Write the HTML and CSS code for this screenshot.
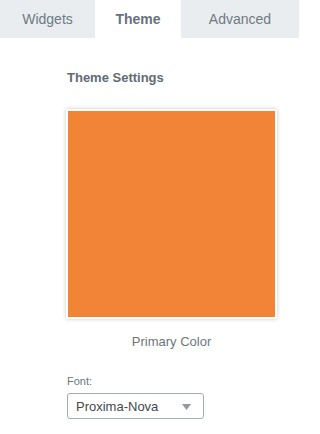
FILE: index.html
```html
<!DOCTYPE html>
<html>
<head>
<meta charset="utf-8">
<link rel="stylesheet" href="styles.css">
</head>
<body>
<div class="tabs">
  <div class="tab tab-widgets">Widgets</div>
  <div class="tab tab-theme active">Theme</div>
  <div class="tab tab-advanced">Advanced</div>
</div>
<div class="content">
  <h2 class="title">Theme Settings</h2>
  <div class="swatch"><div class="swatch-fill"></div></div>
  <div class="swatch-label">Primary Color</div>
  <label class="field-label">Font:</label>
  <div class="select">
    <span>Proxima-Nova</span>
    <svg class="caret" width="9" height="6" viewBox="0 0 9 6"><path d="M0 0H9L4.5 6Z" fill="#8e99a2"/></svg>
  </div>
</div>
</body>
</html>
```
FILE: styles.css
```css
html, body { margin: 0; padding: 0; background: #fff; }
body { font-family: "Liberation Sans", Arial, sans-serif; color: #6b7680; width: 299px; }
.tabs { display: flex; height: 38px; background: #e9edef; }
.tab { display: flex; align-items: center; justify-content: center; font-size: 14px; color: #6f7a83; }
.tab-widgets { width: 95px; }
.tab-theme { width: 86px; }
.tab-advanced { flex: 1; }
.tab.active { background: #fff; font-weight: bold; color: #66727c; }
.content { padding: 32px 0 0 66px; width: 211px; display: flex; flex-direction: column; }
.title { margin: 0 0 0 1px; font-size: 13px; font-weight: bold; color: #5f6b75; line-height: 16px; }
.swatch { margin-top: 23px; width: 207px; height: 206px; padding: 2px; background: #fff; box-shadow: 0 0 4px rgba(0,0,0,0.22); }
.swatch-fill { width: 100%; height: 100%; background: #f18437; }
.swatch-label { margin-top: 15px; text-align: center; font-size: 13px; color: #6b7680; line-height: 16px; }
.field-label { margin-top: 24px; margin-left: 1px; font-size: 11px; color: #6b7680; line-height: 14px; }
.select { margin-top: 5px; margin-left: 1px; height: 24px; border: 1px solid #a3acb3; border-radius: 3px; display: flex; align-items: center; justify-content: space-between; padding: 0 12px 0 8px; box-sizing: content-box; width: 115px; font-size: 13px; color: #3f4850; }
.caret { margin-top: 1px; }
```
